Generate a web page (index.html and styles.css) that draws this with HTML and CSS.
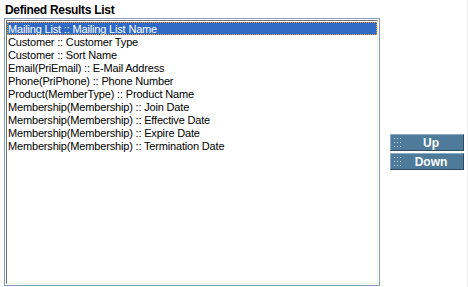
FILE: index.html
```html
<!DOCTYPE html>
<html>
<head>
<meta charset="utf-8">
<link rel="stylesheet" href="styles.css">
</head>
<body>
<div class="page">
  <div class="left">
    <div class="title">Defined Results List</div>
    <div class="listbox-frame">
      <div class="listbox" role="listbox">
        <div class="item selected">Mailing List :: Mailing List Name</div>
        <div class="item">Customer :: Customer Type</div>
        <div class="item">Customer :: Sort Name</div>
        <div class="item">Email(PriEmail) :: E-Mail Address</div>
        <div class="item">Phone(PriPhone) :: Phone Number</div>
        <div class="item">Product(MemberType) :: Product Name</div>
        <div class="item">Membership(Membership) :: Join Date</div>
        <div class="item">Membership(Membership) :: Effective Date</div>
        <div class="item">Membership(Membership) :: Expire Date</div>
        <div class="item">Membership(Membership) :: Termination Date</div>
      </div>
    </div>
  </div>
  <div class="buttons">
    <button class="btn"><span class="grip"></span><span class="label">Up</span></button>
    <button class="btn"><span class="grip"></span><span class="label">Down</span></button>
  </div>
</div>
</body>
</html>
```
FILE: styles.css
```css
html, body {
  margin: 0;
  padding: 0;
  background: #ffffff;
}
body {
  font-family: "Liberation Sans", Arial, sans-serif;
  font-size: 11px;
  color: #000;
}
.page {
  width: 467px;
  height: 287px;
  border-right: 1px solid #ececec;
  display: flex;
  align-items: flex-start;
}
.left {
  width: 379px;
  flex: none;
}
.title {
  font-weight: bold;
  font-size: 12px;
  letter-spacing: -0.3px;
  line-height: 14px;
  padding: 3px 0 0 5px;
  height: 15px;
}
.listbox-frame {
  margin-left: 4px;
  width: 373px;
  height: 265px;
  border: 1px solid #7f9db9;
  padding: 1px 0 0 1px;
  box-sizing: content-box;
}
.listbox {
  height: 261px;
  width: 370px;
  padding-top: 1px;
  border-style: solid;
  border-width: 1px;
  border-color: #716f64 #f1efe2 #f1efe2 #716f64;
  background: #fff;
}
.item {
  height: 13px;
  line-height: 14px;
  padding: 0 1px;
  white-space: nowrap;
  letter-spacing: -0.17px;
}
.item.selected {
  background: #316ac5;
  color: #fff;
  outline: 1px dotted #f0a030;
  outline-offset: -1px;
}
.buttons {
  display: flex;
  flex-direction: column;
  gap: 2px;
  margin-top: 134px;
  margin-left: 11px;
}
.btn {
  width: 74px;
  height: 17px;
  padding: 0;
  margin: 0;
  display: flex;
  align-items: center;
  background: #4f7b9a;
  border-style: solid;
  border-width: 1px;
  border-color: #8aaac2 #2e4b60 #2e4b60 #8aaac2;
  color: #fff;
  font-family: "Liberation Sans", Arial, sans-serif;
  font-weight: bold;
  font-size: 12px;
  box-sizing: border-box;
}
.grip {
  width: 9px;
  height: 9px;
  margin-left: 3px;
  background-image: radial-gradient(circle at 0.5px 0.5px, #c4d6e4 0.7px, transparent 0.8px);
  background-size: 3px 4px;
  flex: none;
}
.label {
  flex: 1;
  text-align: center;
  padding-right: 4px;
}
```
